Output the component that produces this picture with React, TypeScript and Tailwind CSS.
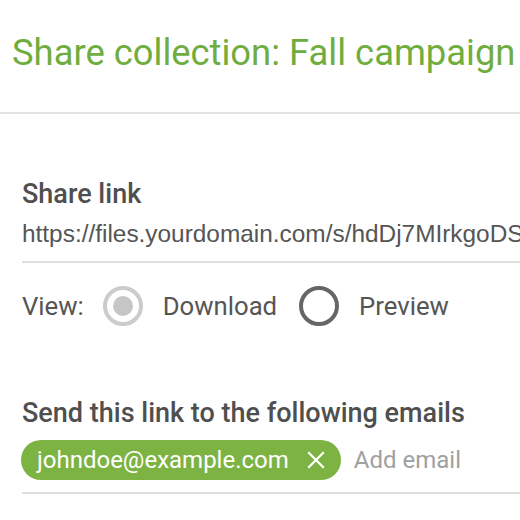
import React from "react";

function Radio({ checked, disabled }: { checked: boolean; disabled?: boolean }) {
  return (
    <span
      className={
        "flex h-[40px] w-[40px] shrink-0 items-center justify-center rounded-full border-[4px] " +
        (disabled ? "border-[#cccccc]" : "border-[#666666]")
      }
    >
      {checked && <span className="h-[20px] w-[20px] rounded-full bg-[#c6c6c6]" />}
    </span>
  );
}

export default function App() {
  return (
    <div className="h-[520px] w-[520px] overflow-hidden bg-white font-['Roboto',sans-serif]">
      <div className="whitespace-nowrap pb-[37px] pl-[12px] pt-[31px] text-[36.4px] leading-[44px] text-[#70ad3f]">
        Share collection: Fall campaign
      </div>
      <div className="h-[2px] bg-[#e2e2e2]" />
      <div className="pl-[22px]">
        <div className="mt-[64px] text-[27px] font-medium leading-[32px] text-[#4f4f4f]">Share link</div>
        <div className="mt-[8px] overflow-hidden whitespace-nowrap border-b-2 border-[#dedede] pb-[11px] font-['Liberation_Sans',sans-serif] text-[24.4px] leading-[32px] text-[#555555]">
          https://files.yourdomain.com/s/hdDj7MIrkgoDS8fa2
        </div>
        <div className="mt-[23px] flex items-center text-[25.7px] leading-[40px] text-[#555555]">
          <span>View:</span>
          <span className="ml-[19px]">
            <Radio checked disabled />
          </span>
          <span className="ml-[20px]">Download</span>
          <span className="ml-[22px]">
            <Radio checked={false} />
          </span>
          <span className="ml-[20px]">Preview</span>
        </div>
        <div className="mt-[71px] text-[27px] font-medium leading-[32px] text-[#4f4f4f]">
          Send this link to the following emails
        </div>
        <div className="mt-[11px] flex items-center border-b-2 border-[#e0e0e0] pb-[12px]">
          <div className="-ml-px flex h-[40px] items-center rounded-full bg-[#7cb342] pl-[16px] pr-[13px] text-[24px] leading-[40px] text-white">
            <span>johndoe@example.com</span>
            <svg className="ml-[15px]" width="24" height="24" viewBox="0 0 24 24" fill="none" stroke="white" strokeWidth="2.2" strokeLinecap="square">
              <path d="M5 5 L19 19 M19 5 L5 19" />
            </svg>
          </div>
          <span className="ml-[13px] text-[24px] leading-[40px] text-[#a0a0a0]">Add email</span>
        </div>
      </div>
    </div>
  );
}
